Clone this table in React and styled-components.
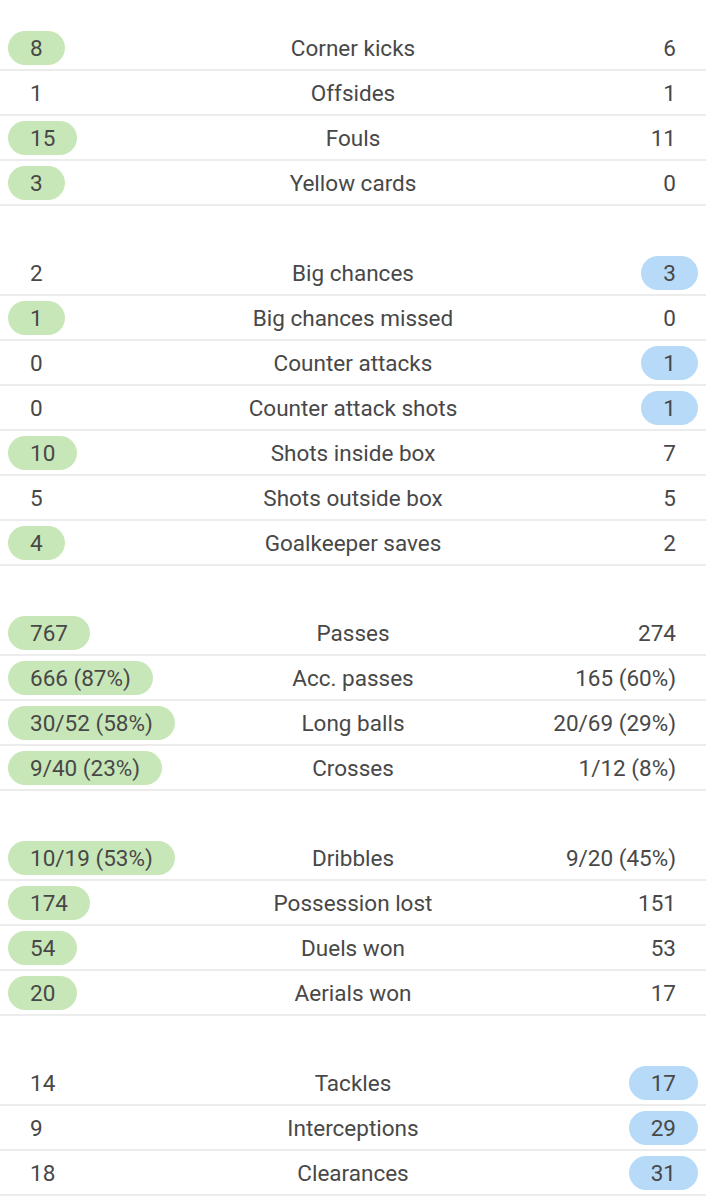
import React from "react";
import styled, { createGlobalStyle } from "styled-components";

const Global = createGlobalStyle`
  html, body { margin: 0; padding: 0; background: #fff; }
  body { font-family: Roboto, "Noto Sans", sans-serif; }
`;

const Page = styled.div`
  width: 706px;
  padding-top: 26px;
`;

const Group = styled.section`
  display: flex;
  flex-direction: column;
  & + & { margin-top: 45px; }
`;

const Row = styled.div`
  display: grid;
  grid-template-columns: 1fr auto 1fr;
  align-items: center;
  box-sizing: border-box;
  height: 45px;
  padding-top: 1px;
  border-bottom: 2px solid #ececec;
  color: #484848;
  font-size: 22.5px;
`;

const Cell = styled.div`
  display: flex;
  justify-content: ${(p) => (p.$side === "left" ? "flex-start" : "flex-end")};
  padding: 0 8px;
`;

const Value = styled.span`
  display: inline-flex;
  align-items: center;
  height: 34px;
  padding: 0 22px;
  border-radius: 17px;
  white-space: nowrap;
  background: ${(p) =>
    p.$win === "home" ? "#c8e7b9" : p.$win === "away" ? "#b6daf8" : "transparent"};
`;

const Label = styled.div`
  text-align: center;
  white-space: nowrap;
`;

const groups = [
  [
    ["8", "Corner kicks", "6", "home"],
    ["1", "Offsides", "1", null],
    ["15", "Fouls", "11", "home"],
    ["3", "Yellow cards", "0", "home"],
  ],
  [
    ["2", "Big chances", "3", "away"],
    ["1", "Big chances missed", "0", "home"],
    ["0", "Counter attacks", "1", "away"],
    ["0", "Counter attack shots", "1", "away"],
    ["10", "Shots inside box", "7", "home"],
    ["5", "Shots outside box", "5", null],
    ["4", "Goalkeeper saves", "2", "home"],
  ],
  [
    ["767", "Passes", "274", "home"],
    ["666 (87%)", "Acc. passes", "165 (60%)", "home"],
    ["30/52 (58%)", "Long balls", "20/69 (29%)", "home"],
    ["9/40 (23%)", "Crosses", "1/12 (8%)", "home"],
  ],
  [
    ["10/19 (53%)", "Dribbles", "9/20 (45%)", "home"],
    ["174", "Possession lost", "151", "home"],
    ["54", "Duels won", "53", "home"],
    ["20", "Aerials won", "17", "home"],
  ],
  [
    ["14", "Tackles", "17", "away"],
    ["9", "Interceptions", "29", "away"],
    ["18", "Clearances", "31", "away"],
  ],
];

export default function App() {
  return (
    <>
      <Global />
      <Page>
        {groups.map((g, i) => (
          <Group key={i}>
            {g.map(([h, label, a, win]) => (
              <Row key={label}>
                <Cell $side="left">
                  <Value $win={win === "home" ? "home" : null}>{h}</Value>
                </Cell>
                <Label>{label}</Label>
                <Cell $side="right">
                  <Value $win={win === "away" ? "away" : null}>{a}</Value>
                </Cell>
              </Row>
            ))}
          </Group>
        ))}
      </Page>
    </>
  );
}
